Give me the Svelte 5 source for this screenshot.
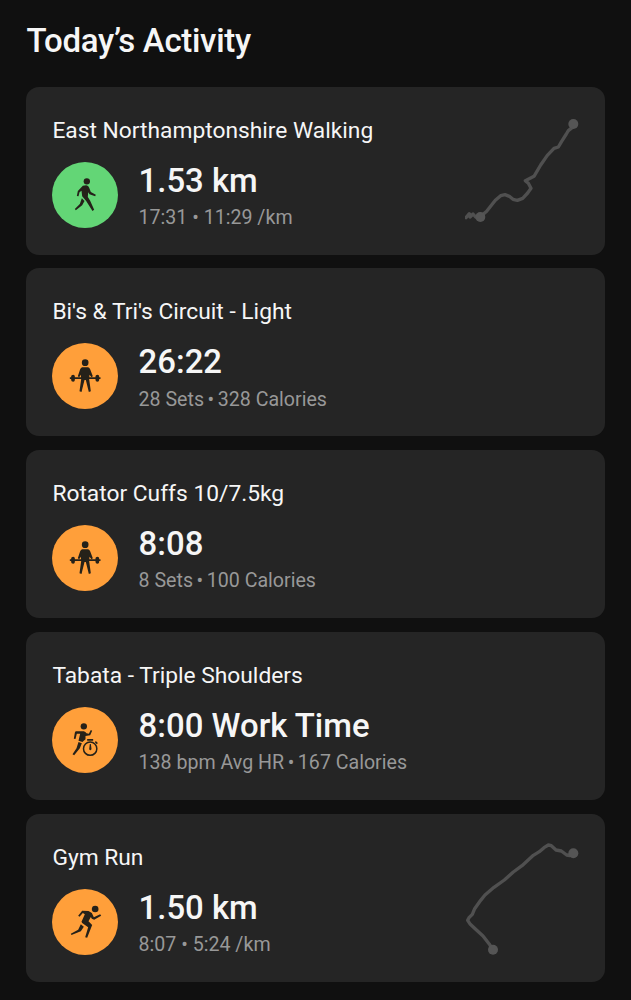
<script lang="ts">
  type Activity = {
    name: string;
    icon: "walk" | "strength" | "hiit" | "run";
    value: string;
    details: [string, string];
    route?: "walk" | "run";
  };

  const activities: Activity[] = [
    {
      name: "East Northamptonshire Walking",
      icon: "walk",
      value: "1.53 km",
      details: ["17:31", "11:29 /km"],
      route: "walk",
    },
    {
      name: "Bi's & Tri's Circuit - Light",
      icon: "strength",
      value: "26:22",
      details: ["28 Sets", "328 Calories"],
    },
    {
      name: "Rotator Cuffs 10/7.5kg",
      icon: "strength",
      value: "8:08",
      details: ["8 Sets", "100 Calories"],
    },
    {
      name: "Tabata - Triple Shoulders",
      icon: "hiit",
      value: "8:00 Work Time",
      details: ["138 bpm Avg HR", "167 Calories"],
    },
    {
      name: "Gym Run",
      icon: "run",
      value: "1.50 km",
      details: ["8:07", "5:24 /km"],
      route: "run",
    },
  ];
</script>

<main>
  <h1>Today’s Activity</h1>
  <div class="list">
    {#each activities as activity}
      <article>
        <div class="info">
          <h2>{activity.name}</h2>
          <div class="summary">
            <div class={`badge ${activity.icon}`}>
              <svg viewBox="21.5 21 198 198">
                {#if activity.icon === "walk"}
                  <circle cx="126" cy="79" r="9.5" />
                  <path
                    d="M114 92L124 91Q131 92 133 98L138 111L153 119L151 124L134 118L130 112L129 126L136 137L148 164L143 168L124 138L112 124L110 107L104 112L101 124L96 123L99 108Z"
                  />
                  <path d="M111 130L119 138L112 151L93 166L90 162L105 147Z" />
                {:else if activity.icon === "strength"}
                  <circle cx="121" cy="80" r="10" />
                  <path
                    d="M112 94H130Q134 95 136 100L144 121L140 124L134 116L133 130L138 166L132 168L123 132H119L110 168L104 166L109 130L108 116L103 124L99 121L106 100Q108 95 112 94Z"
                  />
                  <path
                    d="M75 124H79V121Q79 116 85 116Q90 116 90 121V124H152V121Q152 116 158 116Q163 116 163 121V124H167V129H163V132Q163 137 158 137Q152 137 152 132V129H90V132Q90 137 85 137Q79 137 79 132V129H75Z"
                  />
                {:else if activity.icon === "hiit"}
                  <circle cx="117" cy="79" r="9.5" />
                  <path
                    d="M93 94H117Q122 95 125 100L132 101L138 90L142 92L136 106L122 108L122 118L116 123L113 126L101 122L106 101L96 101L92 117L87 116L90 98Q91 95 93 94Z"
                  />
                  <path d="M101 126L111 130L105 145L88 166L83 163L95 145Z" />
                  <path d="M127 117H145V122H127ZM153 123L159 129L156 133L150 127Z" />
                  <circle class="dial" cx="136" cy="146" r="20" />
                  <path d="M135 132H138L140 147Q139 151 136.500 151Q133 150 133 147Z" />
                {:else}
                  <circle cx="151" cy="81" r="10" />
                  <path
                    d="M112 86L131 87L141 93L147 106L166 97L169 101L148 113L141 110L138 105L131 118L142 129L127 167L121 166L130 136L112 123L110 119L120 97L114 93L104 104L100 101Z"
                  />
                  <path d="M108 127L117 134L108 148L80 159L78 155L100 143Z" />
                {/if}
              </svg>
            </div>
            <div>
              <p class="value">{activity.value}</p>
              <p class="details">
                {activity.details[0]}
                <span class="dot" class:tight={!activity.route}>•</span>
                {activity.details[1]}
              </p>
            </div>
          </div>
        </div>
        {#if activity.route === "walk"}
          <svg class="route" viewBox="30 24 342 348">
            <path
              d="M33 338L43 326L45 336L54 327L62 336L76 335L95 319L121 286L137 272L150 269L163 274L174 283L187 286L203 280L218 264L228 250L220 235L211 227L237 214L257 180L277 151L297 130L310 126L320 109L334 87L340 77L355 65"
            />
            <circle cx="76" cy="336" r="15" />
            <circle cx="355" cy="57" r="15" />
          </svg>
        {:else if activity.route === "run"}
          <svg class="route" viewBox="30 29 342 348">
            <path
              d="M355 69L344 76L335 74L319 62L303 59L289 46L280 44L267 52L253 64L235 75L201 106L175 125L148 149L117 171L90 194L77 210L59 235L52 252L42 262L38 270L46 282L62 297L84 317L102 340L114 358"
            />
            <circle cx="355" cy="69" r="15" />
            <circle cx="114" cy="358" r="15" />
          </svg>
        {/if}
      </article>
    {/each}
  </div>
</main>

<style>
  :global(body) {
    background-color: #101010;
  }

  main {
    box-sizing: border-box;
    height: 1000px;
    overflow: hidden;
    padding: 21px 26px 0;
    background-color: #101010;
    color: #f6f6f6;
    font-family: Roboto, sans-serif;
  }

  h1,
  h2,
  p {
    margin: 0;
    white-space: nowrap;
  }

  h1 {
    padding-left: 0.5px;
    font-size: 33px;
    line-height: 40px;
    font-weight: 500;
    letter-spacing: -0.32px;
  }

  .list {
    display: flex;
    flex-direction: column;
    gap: 13.75px;
    margin-top: 25.6px;
  }

  article {
    box-sizing: border-box;
    display: flex;
    justify-content: space-between;
    height: 168px;
    padding: 26px 26px 26px 26.4px;
    border-radius: 13px;
    background-color: #252525;
  }

  h2 {
    padding-top: 1px;
    font-size: 22.78px;
    line-height: 34px;
    font-weight: 400;
  }

  .summary {
    display: flex;
    gap: 20.2px;
    margin-top: 14px;
  }

  .badge {
    width: 66px;
    height: 66px;
    border-radius: 50%;
    background-color: #ff9f3a;
  }

  .badge.walk {
    background-color: #63d676;
  }

  .badge svg {
    display: block;
    fill: #252119;
  }

  .badge .dial {
    fill: none;
    stroke: #252119;
    stroke-width: 4.5;
  }

  .value {
    font-size: 32.9px;
    line-height: 37.2px;
    font-weight: 500;
  }

  .details {
    margin-top: 6.2px;
    color: #989898;
    font-size: 19.6px;
    line-height: 26px;
  }

  .dot.tight {
    margin: 0 -1.3px;
  }

  .route {
    width: 114px;
    height: 116px;
    fill: #555;
  }

  .route path {
    fill: none;
    stroke: #505050;
    stroke-width: 10;
    stroke-linejoin: round;
    stroke-linecap: round;
  }
</style>
